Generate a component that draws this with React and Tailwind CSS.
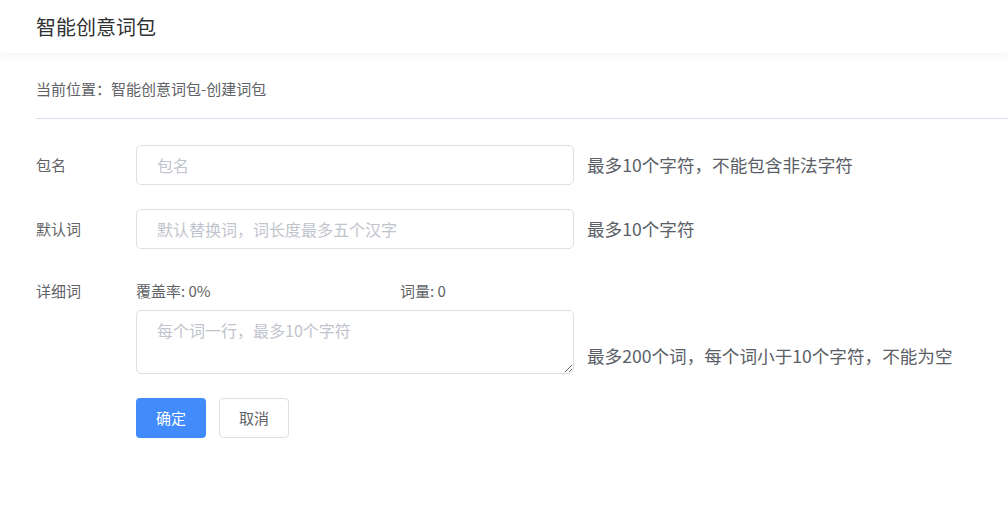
import React, { useState } from 'react';

const App = () => {
  const [name, setName] = useState('');
  const [word, setWord] = useState('');
  const [detail, setDetail] = useState('');

  // count lines that have some text
  const lines = detail.split('\n').filter(l => l.trim() !== '');

  return (
    <div className="min-h-screen bg-white text-[#606266] font-['Noto_Sans_CJK_SC',sans-serif]">
      <div className="relative z-10 h-[53px] flex items-center pl-[36px] bg-white shadow-[0_3px_10px_rgba(0,0,0,0.045)]">
        <h1 className="text-[20px] text-[#303133]">智能创意词包</h1>
      </div>

      <div className="pl-[36px]">
        <div className="pt-[25px] pb-[18px] border-b border-[#dedcec] text-[15px] leading-[22px] text-[#606266]">
          当前位置：智能创意词包-创建词包
        </div>

        <div className="pt-[26px]">
          <div className="flex items-center h-[40px]">
            <label className="w-[100px] text-[15px]">包名</label>
            <input
              value={name}
              onChange={e => setName(e.target.value)}
              placeholder="包名"
              className="w-[438px] h-[40px] px-[20px] border border-[#dcdfe6] rounded-[5px] text-[16px] outline-none placeholder:text-[#c0c4cc]"
            />
            <span className="ml-[13px] text-[17.6px] text-[#5a5e66]">最多10个字符，不能包含非法字符</span>
          </div>

          <div className="flex items-center h-[40px] mt-[24px]">
            <label className="w-[100px] text-[15px]">默认词</label>
            <input
              value={word}
              onChange={e => setWord(e.target.value)}
              placeholder="默认替换词，词长度最多五个汉字"
              className="w-[438px] h-[40px] px-[20px] border border-[#dcdfe6] rounded-[5px] text-[16px] outline-none placeholder:text-[#c0c4cc]"
            />
            <span className="ml-[13px] text-[17.6px] text-[#5a5e66]">最多10个字符</span>
          </div>

          <div className="flex items-start mt-[32px]">
            <label className="w-[100px] text-[15px] leading-[20px]">详细词</label>
            <div>
              <div className="flex h-[20px] items-center text-[15px]">
                <span className="w-[264px]">覆盖率: 0%</span>
                <span>词量: {lines.length}</span>
              </div>
              <div className="flex items-end mt-[9px]">
                <textarea
                  value={detail}
                  onChange={e => setDetail(e.target.value)}
                  placeholder="每个词一行，最多10个字符"
                  className="block w-[438px] h-[64px] px-[20px] py-[7px] border border-[#dcdfe6] rounded-[5px] text-[16px] leading-[24px] outline-none placeholder:text-[#c0c4cc]"
                />
                <span className="ml-[13px] mb-[6px] leading-[24px] text-[17.6px] text-[#5a5e66]">
                  最多200个词，每个词小于10个字符，不能为空
                </span>
              </div>
              <div className="flex mt-[24px]">
                <button className="w-[70px] h-[40px] rounded-[4px] bg-[#418bfd] text-white text-[15px]">确定</button>
                <button className="ml-[13px] w-[70px] h-[40px] rounded-[4px] border border-[#dcdfe6] bg-white text-[15px] text-[#606266]">取消</button>
              </div>
            </div>
          </div>
        </div>
      </div>
    </div>
  );
};

export default App;
